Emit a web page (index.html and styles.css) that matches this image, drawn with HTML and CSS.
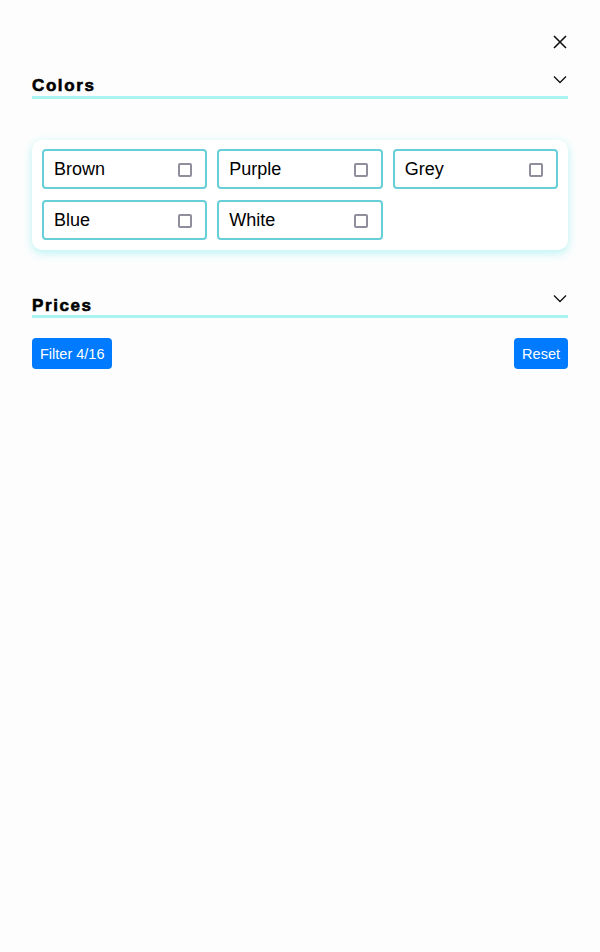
FILE: index.html
```html
<!DOCTYPE html>
<html>
<head>
<meta charset="utf-8">
<link rel="stylesheet" href="styles.css">
</head>
<body>
<div class="panel">
  <div class="topbar">
    <button class="close" aria-label="Close">
      <svg width="16" height="16" viewBox="0 0 16 16"><path d="M2 2L14 14M14 2L2 14" stroke="#111" stroke-width="1.6" fill="none"/></svg>
    </button>
  </div>
  <section class="group">
    <div class="group-head">
      <h2>Colors</h2>
      <svg class="chev" width="14" height="10" viewBox="0 0 14 10"><path d="M1 1.5L7 7.5L13 1.5" stroke="#111" stroke-width="1.3" fill="none"/></svg>
    </div>
    <div class="card">
      <label class="opt"><span>Brown</span><i class="box"></i></label>
      <label class="opt"><span>Purple</span><i class="box"></i></label>
      <label class="opt"><span>Grey</span><i class="box"></i></label>
      <label class="opt"><span>Blue</span><i class="box"></i></label>
      <label class="opt"><span>White</span><i class="box"></i></label>
    </div>
  </section>
  <section class="group prices">
    <div class="group-head">
      <h2>Prices</h2>
      <svg class="chev" width="14" height="10" viewBox="0 0 14 10"><path d="M1 1.5L7 7.5L13 1.5" stroke="#111" stroke-width="1.3" fill="none"/></svg>
    </div>
  </section>
  <div class="actions">
    <button class="btn">Filter 4/16</button>
    <button class="btn">Reset</button>
  </div>
</div>
</body>
</html>
```
FILE: styles.css
```css
html, body {
  margin: 0;
  background: #fdfdfd;
  font-family: "Liberation Sans", Arial, sans-serif;
}
.panel {
  padding: 32px 32px 0 32px;
}
.topbar {
  display: flex;
  justify-content: flex-end;
  height: 20px;
}
.close {
  border: 0;
  background: none;
  padding: 0;
  margin-right: -2px;
  width: 20px;
  height: 20px;
  display: flex;
  align-items: center;
  justify-content: center;
  cursor: pointer;
}
.group-head {
  display: flex;
  justify-content: space-between;
  align-items: flex-start;
  border-bottom: 3px solid #a9f4f0;
  height: 47px;
  box-sizing: border-box;
}
.group-head h2 {
  margin: 0;
  padding-top: 24px;
  font-size: 17px;
  line-height: 20px;
  font-weight: 900;
  letter-spacing: 1.6px;
  -webkit-text-stroke: 0.6px #000;
  color: #000;
}
.chev {
  margin-top: 23px;
  margin-right: 1px;
}
.card {
  margin-top: 41px;
  background: #fff;
  border-radius: 10px;
  box-shadow: 0 3px 10px rgba(100, 230, 235, 0.45);
  padding: 9px 10px 10px 10px;
  display: grid;
  grid-template-columns: repeat(3, 1fr);
  gap: 11px 10px;
}
.opt {
  display: flex;
  align-items: center;
  justify-content: space-between;
  height: 40px;
  box-sizing: border-box;
  border: 2px solid #68cfd8;
  border-radius: 4px;
  padding: 1px 13px 0 10px;
  font-size: 18px;
  color: #000;
}
.box {
  width: 10px;
  height: 10px;
  border: 2px solid #908e9c;
  border-radius: 2px;
  background: #fff;
}
.prices {
  margin-top: 46px;
}
.prices .group-head {
  height: 22px;
}
.prices .group-head h2 {
  padding-top: 0;
}
.prices .chev {
  margin-top: -2px;
}
.actions {
  display: flex;
  justify-content: space-between;
  margin-top: 20px;
}
.btn {
  background: #007bff;
  color: #fff;
  border: 0;
  border-radius: 4px;
  font-family: "Liberation Sans", Arial, sans-serif;
  font-size: 14.5px;
  height: 31px;
  padding: 0 8px;
}
```
